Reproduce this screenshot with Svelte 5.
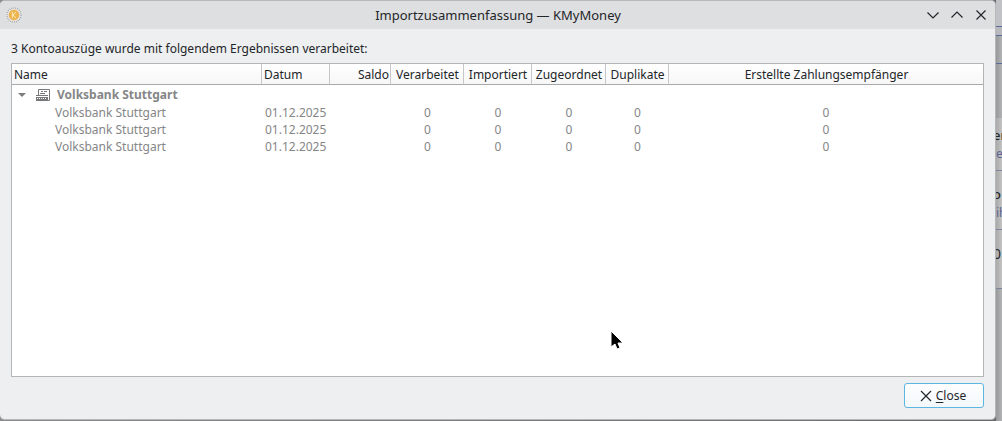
<script lang="ts">
  const columns = [
    { label: "Name", kind: "name" },
    { label: "Datum", kind: "date" },
    { label: "Saldo", kind: "balance" },
    { label: "Verarbeitet", kind: "processed" },
    { label: "Importiert", kind: "imported" },
    { label: "Zugeordnet", kind: "matched" },
    { label: "Duplikate", kind: "duplicates" },
    { label: "Erstellte Zahlungsempfänger", kind: "payees" },
  ];

  const statements = [
    { name: "Volksbank Stuttgart", date: "01.12.2025", counts: [0, 0, 0, 0, 0] },
    { name: "Volksbank Stuttgart", date: "01.12.2025", counts: [0, 0, 0, 0, 0] },
    { name: "Volksbank Stuttgart", date: "01.12.2025", counts: [0, 0, 0, 0, 0] },
  ];

  let expanded = $state(true);
</script>

<div class="desktop">
  <div class="dialog">
    <header>
      <svg class="app-icon" width="16" height="16" viewBox="0 0 16 16">
        <circle cx="8" cy="8" r="7.5" fill="#e9e9e8" />
        <circle cx="8" cy="8" r="7" fill="none" stroke="#a2a4a6" stroke-width="1.4" stroke-dasharray="1 1" />
        <circle cx="8" cy="8" r="5" fill="#efb54e" stroke="#e6a83e" stroke-width="0.6" />
        <path d="M6.500 5v6M10 5L7 8l3 3" fill="none" stroke="#fbe6b8" />
      </svg>
      <h1>Importzusammenfassung — KMyMoney</h1>
      <div class="window-buttons">
        <button aria-label="Minimieren">
          <svg width="14" height="14" viewBox="0 0 14 14"><path d="M1.5 4.5L7 10l5.5-5.5" /></svg>
        </button>
        <button aria-label="Maximieren">
          <svg width="14" height="14" viewBox="0 0 14 14"><path d="M1.5 9.5L7 4l5.5 5.5" /></svg>
        </button>
        <button aria-label="Schließen">
          <svg width="14" height="14" viewBox="0 0 14 14"><path d="M2.5 2.5l9 9M11.5 2.5l-9 9" /></svg>
        </button>
      </div>
    </header>

    <main>
      <p>3 Kontoauszüge wurde mit folgendem Ergebnissen verarbeitet:</p>
      <div class="tree">
        <table>
          <colgroup>
            {#each columns as column}
              <col class={column.kind} />
            {/each}
          </colgroup>
          <thead>
            <tr>
              {#each columns as column}
                <th class={column.kind}>{column.label}</th>
              {/each}
            </tr>
          </thead>
          <tbody>
            <tr class="account">
              <td colspan="8">
                <div class="account-name">
                  <button aria-label="Volksbank Stuttgart" aria-expanded={expanded} onclick={() => (expanded = !expanded)}>
                    <svg width="8" height="4" viewBox="0 0 8 4"><path d="M0 0h8L4 4z" fill="#7b7c7d" /></svg>
                  </button>
                  <svg width="14" height="12" viewBox="0 0 14 12">
                    <path d="M2.5 7V.5h11v11H12M5 2.5h2M8 2.5h3M4 4.5h5M0 6.500h12" fill="none" stroke="#77787a" />
                    <path d="M0 8h12v4H0z" fill="#77787a" />
                    <path d="M1 9.500h1M3 9.500h1M5 9.500h1M7 9.500h1M9 9.500h1" stroke="#ffffff" />
                  </svg>
                  <strong>Volksbank Stuttgart</strong>
                </div>
              </td>
            </tr>
            {#if expanded}
              {#each statements as statement}
                <tr>
                  <td class="name">{statement.name}</td>
                  <td class="date">{statement.date}</td>
                  <td></td>
                  {#each statement.counts as count}
                    <td class="count">{count}</td>
                  {/each}
                </tr>
              {/each}
            {/if}
          </tbody>
        </table>
      </div>
      <footer>
        <button class="close">
          <svg width="12" height="12" viewBox="0 0 12 12"><path d="M1 1l10 10M11 1L1 11" /></svg>
          <span><u>C</u>lose</span>
        </button>
      </footer>
    </main>
  </div>

  <!-- main window showing behind the dialog -->
  <aside>
    <div class="strip toolbar"></div>
    <div class="strip tabs"></div>
    <div class="strip heading"></div>
    <div class="strip blank"></div>
    <div class="strip entry first"><b>er</b><span>e</span></div>
    <div class="strip entry"><b>o</b><span>ih</span></div>
    <div class="strip entry total"><b>0</b></div>
  </aside>

  <svg class="pointer" width="14" height="20" viewBox="0 0 14 20">
    <path d="M1 1v16l4-3 2 5 3-1-2-5h5z" fill="#000" stroke="#fff" />
  </svg>
</div>

<style>
  :global(body) {
    background: #77787a;
  }

  .desktop {
    position: relative;
    display: flex;
    align-items: flex-start;
    min-height: 100vh;
    overflow: hidden;
    font-family: "Noto Sans", sans-serif;
    font-size: 12px;
    line-height: 17px;
    color: #232629;
    background: linear-gradient(90deg, #8c8d8f, #6b6c6e);
  }

  .dialog {
    display: flex;
    flex: 1;
    flex-direction: column;
    box-sizing: border-box;
    height: calc(100vh - 1px);
    overflow: hidden;
    background: #eeeff1;
    border: 1px solid #b6b7b9;
    border-left: none;
    border-radius: 5px;
  }

  button {
    font: inherit;
    color: inherit;
  }

  header {
    display: flex;
    align-items: center;
    height: 28px;
    padding: 0 7px 0 6px;
    background: #dedfe1;
  }

  h1 {
    flex: 1;
    margin: 0;
    padding-left: 48px;
    font-size: 13px;
    font-weight: 400;
    text-align: center;
  }

  .window-buttons {
    display: flex;
    gap: 10px;
  }

  .window-buttons button,
  .account-name button {
    display: flex;
    padding: 0;
    background: none;
    border: none;
  }

  .window-buttons path,
  .close path {
    fill: none;
    stroke: #232629;
    stroke-width: 1.2;
  }

  main {
    display: flex;
    flex: 1;
    flex-direction: column;
    padding: 11px;
  }

  p {
    margin: 0 0 6px;
  }

  .tree {
    flex: 1;
    background: #ffffff;
    border: 1px solid #b4b5b6;
  }

  table {
    width: 100%;
    table-layout: fixed;
    border-collapse: separate;
    border-spacing: 0;
  }

  col.name {
    width: 250px;
  }

  col.date,
  col.imported {
    width: 68px;
  }

  col.balance {
    width: 61px;
  }

  col.processed {
    width: 73px;
  }

  col.matched {
    width: 74px;
  }

  col.duplicates {
    width: 63px;
  }

  th {
    height: 20px;
    padding: 0 1px 0 2px;
    font-weight: 400;
    white-space: nowrap;
    background: linear-gradient(#ffffff, #f7f7f7);
    border-right: 1px solid #c6c7c8;
    border-bottom: 1px solid #a8a9aa;
  }

  th.name,
  th.date {
    text-align: left;
  }

  th.balance {
    text-align: right;
  }

  th.payees {
    border-right: none;
  }

  td {
    height: 17px;
    padding: 0;
    color: #858687;
  }

  td.name {
    padding-left: 43px;
  }

  td.date {
    padding-left: 3px;
  }

  td.count {
    text-align: center;
  }

  .account-name {
    display: flex;
    align-items: center;
    height: 19px;
    padding-left: 6px;
  }

  .account-name button {
    margin-right: 10px;
  }

  .account-name strong {
    margin-left: 7px;
  }

  footer {
    display: flex;
    justify-content: flex-end;
    margin-top: 6px;
  }

  .close {
    display: flex;
    align-items: center;
    justify-content: center;
    gap: 4px;
    width: 80px;
    height: 25px;
    padding: 0 2px 0 0;
    background: linear-gradient(#fdfefe, #f3f8fb);
    border: 1px solid #5cb6e4;
    border-radius: 3px;
  }

  .close u {
    text-underline-offset: 2px;
  }

  aside {
    width: 6px;
    height: 100vh;
    overflow: hidden;
    background: linear-gradient(90deg, #98999b, #b2b3b5);
  }

  .strip {
    box-sizing: border-box;
    overflow: hidden;
    border-bottom: 1px solid #5c6c98;
  }

  .toolbar {
    height: 27px;
    background: #c0c2c5;
  }

  .tabs {
    height: 9px;
    background: #b7b9bc;
  }

  .heading {
    height: 28px;
  }

  .blank {
    height: 54px;
    border-bottom: none;
  }

  .entry {
    display: flex;
    flex-direction: column;
    gap: 1px;
    height: 59px;
    padding-top: 15px;
    background: linear-gradient(90deg, #a9a9a9, #c4c4c4);
    border-bottom-color: #7d869c;
  }

  .entry.first {
    height: 53px;
    padding-top: 9px;
  }

  .entry b {
    font-size: 13px;
    font-weight: 500;
    text-indent: -3px;
  }

  .entry span {
    color: #5b6490;
  }

  .entry.total b {
    font-size: 14px;
    font-weight: 400;
  }

  .pointer {
    position: absolute;
    top: 330px;
    left: 610px;
  }
</style>
